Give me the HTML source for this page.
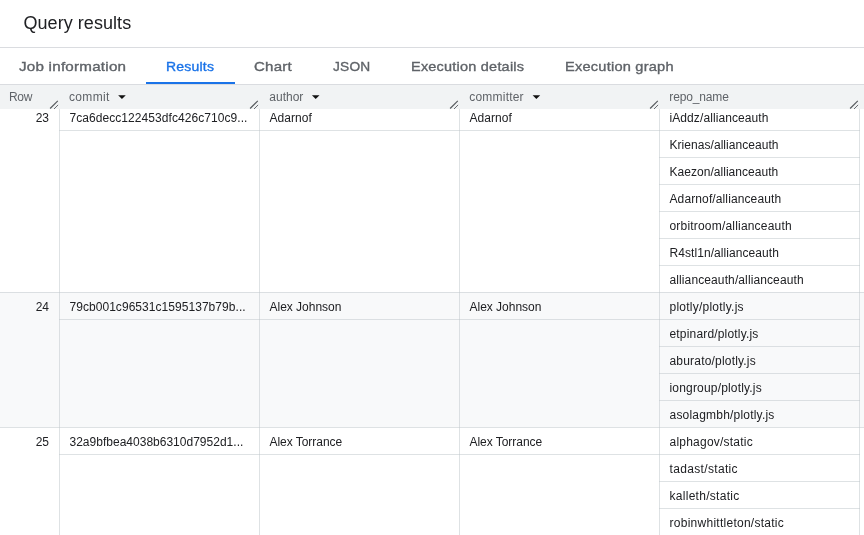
<!DOCTYPE html>
<html><head><meta charset="utf-8">
<style>
*{box-sizing:border-box;margin:0;padding:0}
html,body{width:864px;height:535px;overflow:hidden;background:#fff}
body{font-family:"Liberation Sans",sans-serif;position:relative;color:#202124}
.title{position:absolute;left:23.5px;letter-spacing:0.05px;top:11px;font-size:18px;line-height:24px;color:#202124;white-space:nowrap}
.hl{position:absolute;left:0;width:864px;height:1px;background:#dadce0}
.tab{position:absolute;top:58.0px;font-size:12.75px;line-height:18px;color:#5f6368;white-space:nowrap;-webkit-text-stroke:0.35px;letter-spacing:0.2px;transform-origin:0 0}
.tab.sel{color:#1a73e8}
.ind{position:absolute;left:146px;top:82px;width:89px;height:2px;background:#1a73e8}
.head{position:absolute;left:0;top:85px;width:864px;height:24px;background:#f1f3f4}
.th{position:absolute;top:90px;font-size:12px;line-height:14px;color:#5f6368;white-space:nowrap}
.rowbg{position:absolute;left:0;width:864px}
.vl{position:absolute;width:1px;background:rgba(190,197,202,0.5)}
#grid .hl{background:rgba(190,197,202,0.5)}
.c{position:absolute;font-size:12px;line-height:14px;color:#202124;white-space:nowrap}
.rn{text-align:right;width:40px;left:9px}
#wrap{position:absolute;left:0;top:0;width:864px;height:535px;will-change:transform}
</style></head><body><div id="wrap">
<div class="title">Query results</div>
<div class="hl" style="top:47px"></div>
<div class="tab" style="left:19.0px;transform:scaleX(1.1891)">Job information</div>
<div class="tab sel" style="left:166.2px;transform:scaleX(1.0972)">Results</div>
<div class="tab" style="left:254.3px;transform:scaleX(1.1821)">Chart</div>
<div class="tab" style="left:333.2px;transform:scaleX(1.0757)">JSON</div>
<div class="tab" style="left:411.4px;transform:scaleX(1.1348)">Execution details</div>
<div class="tab" style="left:565.3px;transform:scaleX(1.1433)">Execution graph</div>
<div class="ind"></div>
<div class="hl" style="top:84px"></div>
<div id="grid">
<div class="rowbg" style="top:103px;height:189px;background:#fff"></div>
<div class="vl" style="left:59px;top:103px;height:189px"></div>
<div class="vl" style="left:259px;top:103px;height:189px"></div>
<div class="vl" style="left:459px;top:103px;height:189px"></div>
<div class="vl" style="left:659px;top:103px;height:189px"></div>
<div class="vl" style="left:859px;top:103px;height:189px"></div>
<div class="hl" style="left:59px;width:801px;top:130px"></div>
<div class="hl" style="left:659px;width:201px;top:157px"></div>
<div class="hl" style="left:659px;width:201px;top:184px"></div>
<div class="hl" style="left:659px;width:201px;top:211px"></div>
<div class="hl" style="left:659px;width:201px;top:238px"></div>
<div class="hl" style="left:659px;width:201px;top:265px"></div>
<div class="c rn" style="top:111px">23</div>
<div class="c" style="left:69.5px;top:111px;letter-spacing:0.063px">7ca6decc122453dfc426c710c9...</div>
<div class="c" style="left:269.5px;top:111px;letter-spacing:0.045px">Adarnof</div>
<div class="c" style="left:469.5px;top:111px;letter-spacing:0.045px">Adarnof</div>
<div class="c" style="left:669.5px;top:111px;letter-spacing:0.088px">iAddz/allianceauth</div>
<div class="c" style="left:669.5px;top:138px;letter-spacing:0.049px">Krienas/allianceauth</div>
<div class="c" style="left:669.5px;top:165px;letter-spacing:0.034px">Kaezon/allianceauth</div>
<div class="c" style="left:669.5px;top:192px;letter-spacing:0.115px">Adarnof/allianceauth</div>
<div class="c" style="left:669.5px;top:219px;letter-spacing:0.192px">orbitroom/allianceauth</div>
<div class="c" style="left:669.5px;top:246px;letter-spacing:0.070px">R4stl1n/allianceauth</div>
<div class="c" style="left:669.5px;top:273px;letter-spacing:0.111px">allianceauth/allianceauth</div>
<div class="rowbg" style="top:292px;height:135px;background:#f8f9fa"></div>
<div class="hl" style="top:292px"></div>
<div class="vl" style="left:59px;top:292px;height:135px"></div>
<div class="vl" style="left:259px;top:292px;height:135px"></div>
<div class="vl" style="left:459px;top:292px;height:135px"></div>
<div class="vl" style="left:659px;top:292px;height:135px"></div>
<div class="vl" style="left:859px;top:292px;height:135px"></div>
<div class="hl" style="left:59px;width:801px;top:319px"></div>
<div class="hl" style="left:659px;width:201px;top:346px"></div>
<div class="hl" style="left:659px;width:201px;top:373px"></div>
<div class="hl" style="left:659px;width:201px;top:400px"></div>
<div class="c rn" style="top:300px">24</div>
<div class="c" style="left:69.5px;top:300px;letter-spacing:0.047px">79cb001c96531c1595137b79b...</div>
<div class="c" style="left:269.5px;top:300px;letter-spacing:-0.013px">Alex Johnson</div>
<div class="c" style="left:469.5px;top:300px;letter-spacing:-0.013px">Alex Johnson</div>
<div class="c" style="left:669.5px;top:300px;letter-spacing:0.241px">plotly/plotly.js</div>
<div class="c" style="left:669.5px;top:327px;letter-spacing:0.175px">etpinard/plotly.js</div>
<div class="c" style="left:669.5px;top:354px;letter-spacing:0.190px">aburato/plotly.js</div>
<div class="c" style="left:669.5px;top:381px;letter-spacing:0.178px">iongroup/plotly.js</div>
<div class="c" style="left:669.5px;top:408px;letter-spacing:0.202px">asolagmbh/plotly.js</div>
<div class="rowbg" style="top:427px;height:108px;background:#fff"></div>
<div class="hl" style="top:427px"></div>
<div class="vl" style="left:59px;top:427px;height:108px"></div>
<div class="vl" style="left:259px;top:427px;height:108px"></div>
<div class="vl" style="left:459px;top:427px;height:108px"></div>
<div class="vl" style="left:659px;top:427px;height:108px"></div>
<div class="vl" style="left:859px;top:427px;height:108px"></div>
<div class="hl" style="left:59px;width:801px;top:454px"></div>
<div class="hl" style="left:659px;width:201px;top:481px"></div>
<div class="hl" style="left:659px;width:201px;top:508px"></div>
<div class="c rn" style="top:435px">25</div>
<div class="c" style="left:69.5px;top:435px;letter-spacing:0.011px">32a9bfbea4038b6310d7952d1...</div>
<div class="c" style="left:269.5px;top:435px;letter-spacing:-0.038px">Alex Torrance</div>
<div class="c" style="left:469.5px;top:435px;letter-spacing:-0.038px">Alex Torrance</div>
<div class="c" style="left:669.5px;top:435px;letter-spacing:0.224px">alphagov/static</div>
<div class="c" style="left:669.5px;top:462px;letter-spacing:0.339px">tadast/static</div>
<div class="c" style="left:669.5px;top:489px;letter-spacing:0.282px">kalleth/static</div>
<div class="c" style="left:669.5px;top:516px;letter-spacing:0.265px">robinwhittleton/static</div>
</div><!--g-->
<div class="head"></div>
<svg id="ov" width="864" height="24" viewBox="0 0 864 24" style="position:absolute;left:0;top:85px;overflow:hidden">
<path d="M50.1 23.5L57.8 15.8" stroke="#55585c" stroke-width="1.15" fill="none"/><path d="M53.9 24.1L58.1 19.9" stroke="#5f6368" stroke-width="0.95" fill="none"/>
<path d="M250.1 23.5L257.8 15.8" stroke="#55585c" stroke-width="1.15" fill="none"/><path d="M253.9 24.1L258.1 19.9" stroke="#5f6368" stroke-width="0.95" fill="none"/>
<path d="M450.1 23.5L457.8 15.8" stroke="#55585c" stroke-width="1.15" fill="none"/><path d="M453.9 24.1L458.1 19.9" stroke="#5f6368" stroke-width="0.95" fill="none"/>
<path d="M650.1 23.5L657.8 15.8" stroke="#55585c" stroke-width="1.15" fill="none"/><path d="M653.9 24.1L658.1 19.9" stroke="#5f6368" stroke-width="0.95" fill="none"/>
<path d="M850.1 23.5L857.8 15.8" stroke="#55585c" stroke-width="1.15" fill="none"/><path d="M853.9 24.1L858.1 19.9" stroke="#5f6368" stroke-width="0.95" fill="none"/>
<path d="M118.15 10.2h7.6l-3.8 3.9z" fill="#111"/>
<path d="M311.90 10.2h7.6l-3.8 3.9z" fill="#111"/>
<path d="M532.60 10.2h7.6l-3.8 3.9z" fill="#111"/>
</svg>
<div class="th" style="left:9px;letter-spacing:-0.35px">Row</div>
<div class="th" style="left:69px;letter-spacing:0.35px">commit</div>
<div class="th" style="left:269.3px">author</div>
<div class="th" style="left:469.3px;letter-spacing:0.2px">committer</div>
<div class="th" style="left:669.3px;letter-spacing:-0.15px">repo_name</div>
</div></body></html>
